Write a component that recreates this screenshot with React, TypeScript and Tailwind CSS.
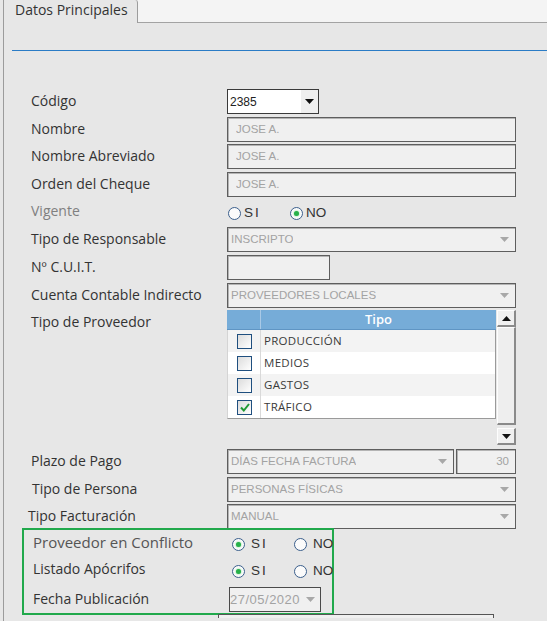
import React from "react";

const Arrow = ({ dark = false }: { dark?: boolean }) => (
  <svg width="9" height="5" viewBox="0 0 9 5" className="shrink-0">
    <path d="M0 0 L9 0 L4.5 5 Z" fill={dark ? "#111" : "#a8a8a8"} />
  </svg>
);

function Label({ children, className = "" }: { children: React.ReactNode; className?: string }) {
  return (
    <div className={`w-[196px] shrink-0 text-[14px] leading-[20px] text-[#333] -mt-[2px] ${className}`}>
      {children}
    </div>
  );
}

function Field({ value, width = "w-[289px]", select = false, align = "left" }: { value?: string; width?: string; select?: boolean; align?: "left" | "right" }) {
  return (
    <div
      className={`${width} h-[25px] flex items-center bg-[#f0f0f0] border border-[#5e5e5e] shadow-[inset_1px_1px_0_#b4b4b4] ${select ? "pl-[3px]" : "pl-[8px]"} pr-[6px] text-[11.5px] text-[#a3a3a3] font-['Liberation_Sans',sans-serif] ${align === "right" ? "justify-end" : "justify-between"}`}
    >
      <span className="truncate">{value}</span>
      {select && <Arrow />}
    </div>
  );
}

function Radio({ checked }: { checked: boolean }) {
  return (
    <span className="w-[13px] h-[13px] rounded-full border border-[#3b5f8c] bg-[#fbfbfb] flex items-center justify-center shrink-0">
      {checked && <span className="w-[5px] h-[5px] rounded-full bg-[#27b04a] shadow-[0_0_2px_#5fd07a]" />}
    </span>
  );
}

function RadioPair({ si, offset = "ml-0", gap = "gap-[4px]" }: { si: boolean; offset?: string; gap?: string }) {
  return (
    <div className={`flex items-center ${offset} text-[13.5px] text-[#333] font-['Liberation_Sans',sans-serif] pt-[3px]`}>
      <div className={`w-[62px] flex items-center ${gap}`}>
        <Radio checked={si} />
        <span className="tracking-[2px]">SI</span>
      </div>
      <div className={`flex items-center ${gap}`}>
        <Radio checked={!si} />
        <span>NO</span>
      </div>
    </div>
  );
}

function Checkbox({ checked }: { checked: boolean }) {
  return (
    <span className="w-[15px] h-[15px] border-[1.5px] border-[#1f4f7f] bg-gradient-to-br from-[#dcdcdc] to-[#ffffff] flex items-center justify-center">
      {checked && (
        <svg width="10" height="9" viewBox="0 0 10 9">
          <path d="M1 4.5 L3.8 7.5 L9 1" stroke="#1f9a34" strokeWidth="2" fill="none" />
        </svg>
      )}
    </span>
  );
}

const tipos = [
  { name: "PRODUCCIÓN", checked: false },
  { name: "MEDIOS", checked: false },
  { name: "GASTOS", checked: false },
  { name: "TRÁFICO", checked: true },
];

function ScrollBtn({ up }: { up: boolean }) {
  return (
    <div className="h-[17px] bg-[#f0f0f0] border-t border-l border-[#fdfdfd] border-r-2 border-b-2 border-r-[#8a8a8a] border-b-[#8a8a8a] flex items-center justify-center">
      <svg width="9" height="5" viewBox="0 0 9 5">
        <path d={up ? "M0 5 L9 5 L4.5 0 Z" : "M0 0 L9 0 L4.5 5 Z"} fill="#111" />
      </svg>
    </div>
  );
}

function TipoGrid() {
  return (
    <div className="flex h-[135px]">
      <div className="w-[269px] flex flex-col">
        <div className="flex h-[20px] bg-[#76acd8] border-b border-[#5f95c4]">
          <div className="w-[34px] border-r border-[#a9c9e6]" />
          <div className="flex-1 flex items-center justify-center text-white text-[13px] font-semibold">
            Tipo
          </div>
        </div>
        <div className="border-r border-b border-[#9a9a9a] border-l border-l-[#d4d4d4]">
          {tipos.map((t, i) => (
            <div key={t.name} className={`flex h-[22px] ${i % 2 === 0 ? "bg-[#f3f3f3]" : "bg-white"}`}>
              <div className="w-[33px] flex items-center justify-center border-r border-[#d9d9d9] pl-[1px]">
                <Checkbox checked={t.checked} />
              </div>
              <div className="flex-1 flex items-center pl-[3px] text-[11.5px] font-medium tracking-[0.3px] text-[#3a3a3a]">
                {t.name}
              </div>
            </div>
          ))}
        </div>
      </div>
      <div className="w-[19px] ml-[1px] flex flex-col">
        <ScrollBtn up />
        <div className="h-[98px] bg-[#eeeeee] border-t border-l border-[#fdfdfd] border-r-2 border-b-2 border-r-[#8a8a8a] border-b-[#8a8a8a]" />
        <div className="h-[3px]" />
        <ScrollBtn up={false} />
      </div>
    </div>
  );
}

export default function App() {
  return (
    <div className="w-[547px] h-[621px] overflow-hidden bg-[#e7e7e7] font-['Open_Sans',sans-serif] flex flex-col">
      {/* tab strip */}
      <div className="flex h-[23px] shrink-0">
        <div className="ml-[3px] w-[135px] border-l border-r border-[#9c9c9c] rounded-tr-[3px] bg-[#e7e7e7] pl-[11px] text-[14px] leading-[20px] text-[#333]">
          Datos Principales
        </div>
        <div className="flex-1 bg-[#f4f4f4] border-b border-[#a3a3a3]" />
      </div>

      <div className="ml-[3px] flex-1 border-l border-[#9c9c9c] flex flex-col">
        <div className="ml-[8px] mt-[27px] h-[1px] bg-[#2b7cc6]" />

        <div className="mt-[38px] flex flex-col">
          <div className="flex items-center h-[25px] pl-[27px]">
            <Label>Código</Label>
            <div className="w-[92px] h-[25px] bg-white border border-[#3a3a3a] flex items-center text-[12px] text-[#222] font-['Liberation_Sans',sans-serif]">
              <span className="flex-1 pl-[2px]">2385</span>
              <span className="w-[17px] h-full bg-[#efefef] flex items-center justify-center">
                <Arrow dark />
              </span>
            </div>
          </div>

          <div className="flex items-center mt-[3px] pl-[27px]">
            <Label>Nombre</Label>
            <Field value="JOSE A." />
          </div>
          <div className="flex items-center mt-[2px] pl-[27px]">
            <Label>Nombre Abreviado</Label>
            <Field value="JOSE A." />
          </div>
          <div className="flex items-center mt-[3px] pl-[27px]">
            <Label>Orden del Cheque</Label>
            <Field value="JOSE A." />
          </div>

          <div className="flex items-center h-[24px] mt-[3px] pl-[27px]">
            <Label className="text-[#808080]">Vigente</Label>
            <RadioPair si={false} offset="ml-[1px]" gap="gap-[3px]" />
          </div>

          <div className="flex items-center mt-[3px] pl-[27px]">
            <Label>Tipo de Responsable</Label>
            <Field value="INSCRIPTO" select />
          </div>
          <div className="flex items-center mt-[3px] pl-[27px]">
            <Label>Nº C.U.I.T.</Label>
            <Field width="w-[103px]" />
          </div>
          <div className="flex items-center mt-[3px] pl-[27px]">
            <Label>Cuenta Contable Indirecto</Label>
            <Field value="PROVEEDORES LOCALES" select />
          </div>

          <div className="flex items-start mt-[2px] pl-[27px]">
            <Label className="pt-[4px]">Tipo de Proveedor</Label>
            <TipoGrid />
          </div>

          <div className="flex items-center mt-[4px] pl-[27px]">
            <Label>Plazo de Pago</Label>
            <div className="flex gap-[2px]">
              <Field value="DÍAS FECHA FACTURA" width="w-[227px]" select />
              <Field value="30" width="w-[60px]" align="right" />
            </div>
          </div>
          <div className="flex items-center mt-[3px] pl-[27px]">
            <Label className="pl-[1px]">Tipo de Persona</Label>
            <Field value="PERSONAS FÍSICAS" select />
          </div>
          <div className="flex items-center mt-[2px] pl-[24px]">
            <Label className="w-[199px]">Tipo Facturación</Label>
            <Field value="MANUAL" select />
          </div>

          <div className="ml-[18px] -mt-[1px] w-[312px] border-2 border-[#21a94c] pt-[1px] pb-[1px] pl-[9px] flex flex-col">
            <div className="flex items-center h-[24px]">
              <Label className="w-[194px] text-[15px] text-[#555]">Proveedor en Conflicto</Label>
              <RadioPair si offset="ml-[3px]" gap="gap-[6px]" />
            </div>
            <div className="flex items-center h-[24px] mt-[3px]">
              <Label className="w-[194px]">Listado Apócrifos</Label>
              <RadioPair si offset="ml-[3px]" gap="gap-[6px]" />
            </div>
            <div className="flex items-center mt-[5px]">
              <Label className="w-[194px]">Fecha Publicación</Label>
              <div className="w-[92px] h-[25px] flex items-center justify-between bg-[#f0f0f0] border border-[#4a4a4a] pr-[5px] text-[13px] tracking-[0.5px] text-[#a3a3a3] font-['Liberation_Sans',sans-serif]">
                <span>27/05/2020</span>
                <Arrow />
              </div>
            </div>
          </div>
          <div className="ml-[214px] mt-[-1px] w-[276px] h-[4px] border-t border-l border-r border-[#555] bg-[#f0f0f0]" />
        </div>
      </div>
    </div>
  );
}
